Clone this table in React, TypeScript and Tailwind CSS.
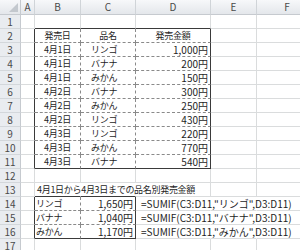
import React from 'react';

type Line = 'grid' | 'dark' | 'dash' | 'none';

interface CellSpec {
  text?: string;
  align?: 'left' | 'center' | 'right';
  pad?: string;
  jp?: boolean;
  r: Line;
  b: Line;
}

const rightLine: Record<Line, string> = {
  grid: 'border-r border-r-[#dadcdd]',
  dark: 'border-r border-r-[#3a3a3a]',
  dash: 'border-r border-r-[#8a8a8a] [border-right-style:dashed]',
  none: 'border-r border-r-transparent',
};

const bottomLine: Record<Line, string> = {
  grid: 'border-b border-b-[#dadcdd]',
  dark: 'border-b border-b-[#3a3a3a]',
  dash: 'border-b border-b-[#8a8a8a] [border-bottom-style:dashed]',
  none: 'border-b border-b-transparent',
};

const alignClass = {
  left: 'justify-start',
  center: 'justify-center',
  right: 'justify-end pr-[2px]',
};

const sales: [string, string, string][] = [
  ['4月1日', 'リンゴ', '1,000円'],
  ['4月1日', 'バナナ', '200円'],
  ['4月1日', 'みかん', '150円'],
  ['4月2日', 'バナナ', '300円'],
  ['4月2日', 'みかん', '250円'],
  ['4月2日', 'リンゴ', '430円'],
  ['4月3日', 'リンゴ', '220円'],
  ['4月3日', 'みかん', '770円'],
  ['4月3日', 'バナナ', '540円'],
];

const totals: [string, string][] = [
  ['リンゴ', '1,650円'],
  ['バナナ', '1,040円'],
  ['みかん', '1,170円'],
];

// builds the 17 x 6 sheet (columns A-F)
function buildSheet(): CellSpec[][] {
  const rows: CellSpec[][] = [];
  for (let r = 1; r <= 17; r++) {
    const row: CellSpec[] = [];
    for (let c = 0; c < 6; c++) row.push({ r: 'grid', b: 'grid' });
    rows.push(row);
  }
  const at = (r: number) => rows[r - 1];

  // table 1: B2:D11
  at(1)[1].b = 'dark';
  at(1)[2].b = 'dark';
  at(1)[3].b = 'dark';
  for (let r = 2; r <= 11; r++) {
    const last = r === 11;
    at(r)[0].r = 'dark';
    at(r)[1] = { ...at(r)[1], r: 'dash', b: last ? 'dark' : 'dash' };
    at(r)[2] = { ...at(r)[2], r: 'dash', b: last ? 'dark' : 'dash' };
    at(r)[3] = { ...at(r)[3], r: 'dark', b: last ? 'dark' : 'dash' };
  }
  ['発売日', '品名', '発売金額'].forEach((t, i) => {
    const cell = at(2)[i + 1];
    cell.text = t;
    cell.align = 'center';
    cell.jp = true;
  });
  sales.forEach(([d, n, a], i) => {
    const row = at(3 + i);
    row[1] = { ...row[1], text: d, align: 'center', jp: true };
    row[2] = { ...row[2], text: n, align: 'left', pad: 'pl-[10px]', jp: true };
    row[3] = { ...row[3], text: a, align: 'right' };
  });

  // caption row 13
  at(13)[1] = {
    text: '4月1日から4月3日までの品名別発売金額',
    align: 'left',
    pad: 'pl-[2px]',
    jp: true,
    r: 'none',
    b: 'dark',
  };
  at(13)[2] = { r: 'none', b: 'dark' };

  // table 2: B14:C16
  totals.forEach(([n, a], i) => {
    const r = 14 + i;
    const last = r === 16;
    const row = at(r);
    row[0].r = 'dark';
    row[1] = { text: n, align: 'left', pad: 'pl-[1px]', jp: true, r: 'dash', b: last ? 'dark' : 'dash' };
    row[2] = { text: a, align: 'right', r: 'dark', b: last ? 'dark' : 'dash' };
    row[3] = {
      text: `=SUMIF(C3:D11,"${n}",D3:D11)`,
      align: 'left',
      pad: 'pl-[5px]',
      r: 'none',
      b: 'grid',
    };
    row[4].r = 'none';
  });
  return rows;
}

const font = { fontFamily: '"Noto Sans CJK JP", "Liberation Sans", sans-serif' };

const ColHeader: React.FC<{ label: string; last?: boolean }> = ({ label, last }) => (
  <div
    className={`flex items-center justify-center bg-gradient-to-b from-[#f7f8fa] to-[#e4e7eb] border-b border-b-[#c6cacf] text-[10px] leading-none text-[#4a4a4a] ${
      last ? '' : 'border-r border-r-[#d0d4d8]'
    }`}
  >
    {label}
  </div>
);

const RowHeader: React.FC<{ n: number }> = ({ n }) => (
  <div className="flex items-center justify-center bg-[#e9ecf0] border-r border-r-[#c6cacf] border-b border-b-[#d3d7db] text-[10px] leading-none text-[#4a4a4a]">
    {n}
  </div>
);

export default function App() {
  const sheet = buildSheet();
  return (
    <div className="w-[300px] h-[250px] overflow-hidden bg-white" style={font}>
      <div className="grid grid-cols-[21px_14px_46px_55px_75px_46px_60px] grid-rows-[15px_repeat(17,14px)]">
        <div className="flex items-end justify-end bg-gradient-to-b from-[#f7f8fa] to-[#e4e7eb] border-r border-r-[#c6cacf] border-b border-b-[#c6cacf] pr-[2px] pb-[2px]">
          <svg width="9" height="9" viewBox="0 0 9 9">
            <polygon points="9,0 9,9 0,9" fill="#c3c8ce" />
          </svg>
        </div>
        {['A', 'B', 'C', 'D', 'E', 'F'].map((c, i) => (
          <ColHeader key={c} label={c} last={i === 5} />
        ))}
        {sheet.map((row, ri) => (
          <React.Fragment key={ri}>
            <RowHeader n={ri + 1} />
            {row.map((cell, ci) => (
              <div
                key={ci}
                className={`flex items-center whitespace-nowrap leading-[12px] text-[#1e1e1e] ${
                  cell.jp ? 'text-[9px] tracking-[-0.3px]' : 'text-[10px]'
                } ${rightLine[cell.r]} ${bottomLine[cell.b]} ${cell.align ? alignClass[cell.align] : ''} ${
                  cell.pad ?? ''
                }`}
              >
                {cell.text}
              </div>
            ))}
          </React.Fragment>
        ))}
      </div>
    </div>
  );
}
